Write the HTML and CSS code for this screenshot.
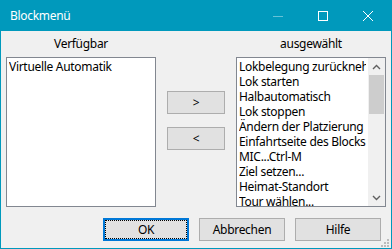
FILE: index.html
```html
<!DOCTYPE html>
<html lang="de">
<head>
  <meta charset="UTF-8">
  <title>Blockmenü</title>
  <link rel="stylesheet" href="styles.css">
</head>
<body>

<div class="window">
  <!-- TITELLEISTE -->
  <div class="titlebar">
    <span class="title">Blockmenü</span>
    <div class="caption-buttons">
      <span class="cap-btn">
        <svg width="10" height="10" viewBox="0 0 10 10"><path d="M0 5.5h10" stroke="#66c2d7" stroke-width="1"/></svg>
      </span>
      <span class="cap-btn">
        <svg width="10" height="10" viewBox="0 0 10 10"><rect x="0.5" y="0.5" width="9" height="9" fill="none" stroke="#fff" stroke-width="1"/></svg>
      </span>
      <span class="cap-btn">
        <svg width="10" height="10" viewBox="0 0 10 10"><path d="M0 0L10 10M10 0L0 10" stroke="#fff" stroke-width="1"/></svg>
      </span>
    </div>
  </div>

  <!-- DIALOG -->
  <div class="client">
    <div class="lists">
      <div class="column">
        <div class="col-label">Verfügbar</div>
        <div class="listbox">
          <div class="list-items">
            <div class="item">Virtuelle Automatik</div>
          </div>
        </div>
      </div>

      <div class="move-buttons">
        <button class="btn btn-small">&gt;</button>
        <button class="btn btn-small">&lt;</button>
      </div>

      <div class="column">
        <div class="col-label">ausgewählt</div>
        <div class="listbox">
          <div class="list-items">
            <div class="item">Lokbelegung zurücknehmen</div>
            <div class="item">Lok starten</div>
            <div class="item">Halbautomatisch</div>
            <div class="item">Lok stoppen</div>
            <div class="item">Ändern der Platzierung</div>
            <div class="item">Einfahrtseite des Blocks festlegen</div>
            <div class="item">MIC...Ctrl-M</div>
            <div class="item">Ziel setzen...</div>
            <div class="item">Heimat-Standort</div>
            <div class="item">Tour wählen...</div>
          </div>
          <div class="scrollbar">
            <div class="scroll-arrow">
              <svg width="9" height="6" viewBox="0 0 9 6"><path d="M1 5L4.5 1.5L8 5" fill="none" stroke="#606060" stroke-width="1.4"/></svg>
            </div>
            <div class="scroll-track"><div class="scroll-thumb"></div></div>
            <div class="scroll-arrow">
              <svg width="9" height="6" viewBox="0 0 9 6"><path d="M1 1L4.5 4.5L8 1" fill="none" stroke="#606060" stroke-width="1.4"/></svg>
            </div>
          </div>
        </div>
      </div>
    </div>

    <div class="dialog-buttons">
      <button class="btn btn-default">OK</button>
      <button class="btn">Abbrechen</button>
      <button class="btn">Hilfe</button>
    </div>

    <!-- Größenänderungsgriff -->
    <svg class="grip" width="8" height="8" viewBox="0 0 8 8" fill="#bcbcbc">
      <rect x="6" y="0" width="2" height="2"/>
      <rect x="3" y="3" width="2" height="2"/>
      <rect x="6" y="3" width="2" height="2"/>
      <rect x="0" y="6" width="2" height="2"/>
      <rect x="3" y="6" width="2" height="2"/>
      <rect x="6" y="6" width="2" height="2"/>
    </svg>
  </div>
</div>

</body>
</html>
```

FILE: styles.css
```css
* { box-sizing: border-box; }
body { margin: 0; font-family: "Noto Sans", "Open Sans", sans-serif; font-size: 12px; letter-spacing: -0.3px; background: #f0f0f0; color: #000; }

.window { width: 392px; height: 249px; display: flex; flex-direction: column; }

/* TITELLEISTE */
.titlebar { height: 31px; background: #0099bc; color: #fff; display: flex; align-items: center; padding-left: 10px; }
.title { flex: 1; }
.caption-buttons { display: flex; align-self: stretch; margin-right: 2px; }
.cap-btn { width: 45px; display: flex; align-items: center; justify-content: center; }

/* INHALT */
.client {
  flex: 1;
  position: relative;
  border: 1px solid #0099bc;
  border-top: 0;
  padding: 0 5px 7px;
  display: flex;
  flex-direction: column;
}
.lists { display: flex; }
.column { width: 150px; display: flex; flex-direction: column; }
.col-label { height: 26px; line-height: 26px; text-align: center; }

.listbox { height: 150px; border: 1px solid #828790; background: #fff; display: flex; overflow: hidden; }
.list-items { flex: 1; min-width: 0; padding: 1px 2px; overflow: hidden; }
.item { line-height: 15px; white-space: nowrap; overflow: hidden; }

.scrollbar { width: 17px; background: #f0f0f0; display: flex; flex-direction: column; }
.scroll-arrow { height: 17px; display: flex; align-items: center; justify-content: center; }
.scroll-track { flex: 1; padding: 0 1px; }
.scroll-thumb { height: 39px; background: #cdcdcd; }

.move-buttons { width: 80px; display: flex; flex-direction: column; align-items: center; gap: 13px; padding-top: 60px; }

/* BUTTONS */
.btn { height: 23px; width: 86px; padding: 0; background: #e1e1e1; border: 1px solid #adadad; font: inherit; letter-spacing: inherit; color: #000; }
.btn-small { width: 58px; }
.btn-default { border: 2px solid #0078d7; outline: 1px dotted #000; outline-offset: -3px; }
.dialog-buttons { display: flex; justify-content: flex-end; gap: 10px; margin-top: 11px; padding-right: 5px; }

.grip { position: absolute; right: 2px; bottom: 1px; }
```
